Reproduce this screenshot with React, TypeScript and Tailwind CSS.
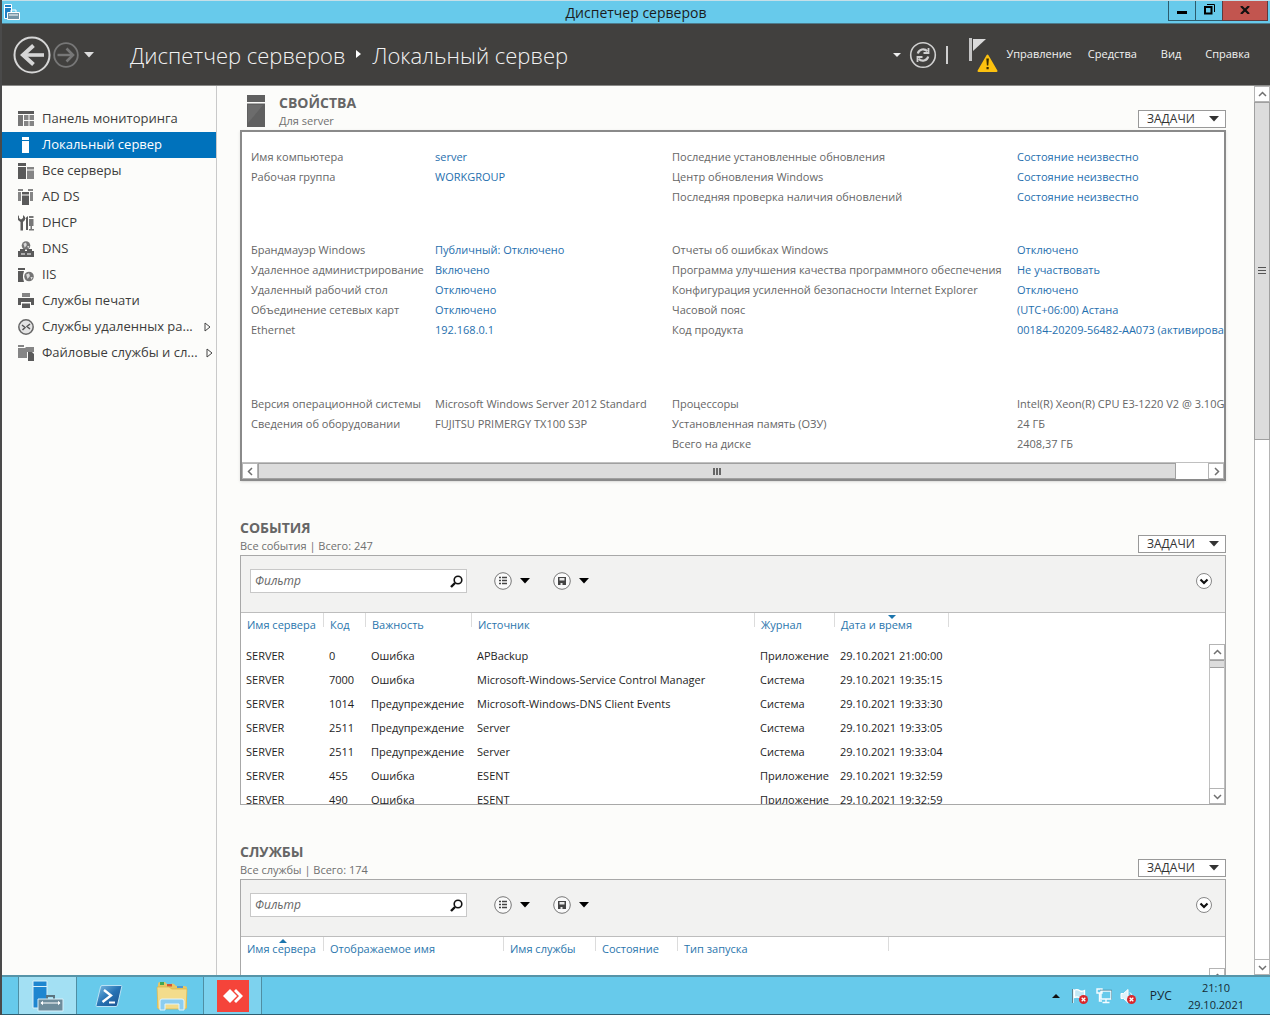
import { ReactNode, useState } from "react";

const properties = [
    {
        left: [
            ['Имя компьютера', 'server'],
            ['Рабочая группа', 'WORKGROUP'],
        ],
        right: [
            ['Последние установленные обновления', 'Состояние неизвестно'],
            ['Центр обновления Windows', 'Состояние неизвестно'],
            ['Последняя проверка наличия обновлений', 'Состояние неизвестно'],
        ],
        isLink: true,
    },
    {
        left: [
            ['Брандмауэр Windows', 'Публичный: Отключено'],
            ['Удаленное администрирование', 'Включено'],
            ['Удаленный рабочий стол', 'Отключено'],
            ['Объединение сетевых карт', 'Отключено'],
            ['Ethernet', '192.168.0.1'],
        ],
        right: [
            ['Отчеты об ошибках Windows', 'Отключено'],
            ['Программа улучшения качества программного обеспечения', 'Не участвовать'],
            ['Конфигурация усиленной безопасности Internet Explorer', 'Отключено'],
            ['Часовой пояс', '(UTC+06:00) Астана'],
            ['Код продукта', '00184-20209-56482-AA073 (активировано)'],
        ],
        isLink: true,
    },
    {
        left: [
            ['Версия операционной системы', 'Microsoft Windows Server 2012 Standard'],
            ['Сведения об оборудовании', 'FUJITSU PRIMERGY TX100 S3P'],
        ],
        right: [
            ['Процессоры', 'Intel(R) Xeon(R) CPU E3-1220 V2 @ 3.10GHz'],
            ['Установленная память (ОЗУ)', '24 ГБ'],
            ['Всего на диске', '2408,37 ГБ'],
        ],
        isLink: false,
    },
]

type Column = { name: string; width: string; sort?: 'up' | 'down' }

const eventColumns: Column[] = [
    { name: 'Имя сервера', width: 'w-[83px]' },
    { name: 'Код', width: 'w-[42px]' },
    { name: 'Важность', width: 'w-[106px]' },
    { name: 'Источник', width: 'w-[283px]' },
    { name: 'Журнал', width: 'w-[80px]' },
    { name: 'Дата и время', width: 'w-[114px]', sort: 'down' },
]

const events = [
    ['SERVER', '0', 'Ошибка', 'APBackup', 'Приложение', '29.10.2021 21:00:00'],
    ['SERVER', '7000', 'Ошибка', 'Microsoft-Windows-Service Control Manager', 'Система', '29.10.2021 19:35:15'],
    ['SERVER', '1014', 'Предупреждение', 'Microsoft-Windows-DNS Client Events', 'Система', '29.10.2021 19:33:30'],
    ['SERVER', '2511', 'Предупреждение', 'Server', 'Система', '29.10.2021 19:33:05'],
    ['SERVER', '2511', 'Предупреждение', 'Server', 'Система', '29.10.2021 19:33:04'],
    ['SERVER', '455', 'Ошибка', 'ESENT', 'Приложение', '29.10.2021 19:32:59'],
    ['SERVER', '490', 'Ошибка', 'ESENT', 'Приложение', '29.10.2021 19:32:59'],
]

const serviceColumns: Column[] = [
    { name: 'Имя сервера', width: 'w-[83px]', sort: 'up' },
    { name: 'Отображаемое имя', width: 'w-[180px]' },
    { name: 'Имя службы', width: 'w-[92px]' },
    { name: 'Состояние', width: 'w-[82px]' },
    { name: 'Тип запуска', width: 'w-[211px]' },
]

function NavIcon({ children }: { children: ReactNode }) {
    return <svg viewBox="0 0 16 16" className="w-4 h-4 shrink-0" fill="#5a5a5a" aria-hidden="true">{children}</svg>
}

const globe = (cx: number, cy: number, r: number) => (
    <g>
        <circle cx={cx} cy={cy} r={r} fill="#747474" />
        <path d={`M${cx - r * 0.6} ${cy - r * 0.4} l${r * 0.6} ${-r * 0.3} l${r * 0.2} ${r * 0.6} l${-r * 0.5} ${r * 0.6}z M${cx + r * 0.3} ${cy + r * 0.1} l${r * 0.5} 0 l${-r * 0.3} ${r * 0.6}z`} fill="#d8d8d8" />
    </g>
)

const navItems = [
    {
        text: 'Панель мониторинга',
        icon: <NavIcon><path d="M0 0h16v3H0z" /><path d="M0 4h5v11H0z" fill="#777" /><path d="M6 4h4.500v5H6zM11.500 4H16v5h-4.500zM6 10h4.500v5H6zM11.500 10H16v5h-4.500z" fill="#858585" /></NavIcon>,
    },
    {
        text: 'Локальный сервер',
        icon: <NavIcon><path d="M4 0h7v3H4zM4 4h7v12H4z" fill="#fff" /></NavIcon>,
    },
    {
        text: 'Все серверы',
        icon: <NavIcon><path d="M0 0h8v3H0zM0 4h8v12H0z" /><path d="M9 4h7v2.500H9zM9 7.500h7V16H9z" fill="#858585" /></NavIcon>,
    },
    {
        text: 'AD DS',
        icon: <NavIcon><path d="M0 0h5v2H0zM10 0h5v2h-5zM0 3h3v9H0zM12 3h3v9h-3z" fill="#858585" /><path d="M4 3h7v2.500H4zM4 6.500h7V16H4z" /></NavIcon>,
    },
    {
        text: 'DHCP',
        icon: <NavIcon><path d="M1 0v3l2 1.500L5 3V0l2 2v3L5 7v8.500H2.500V7L0 5V1.500z" /><path d="M7.500 3L10 1v14H8V4h-.5z" /><path d="M11 1h4.500v2H11zM11 4h4.500v7H11zM12.500 11h1.500v3h2v1.500h-5V14h1.500z" fill="#777" /></NavIcon>,
    },
    {
        text: 'DNS',
        icon: <NavIcon>{globe(8, 4.5, 4.3)}<path d="M2 8h5v2h2V8h5v2h2v6H0v-6h2z" /><path d="M3 12.500h4v1H3zM9 12.500h4v1H9z" fill="#fff" /></NavIcon>,
    },
    {
        text: 'IIS',
        icon: <NavIcon><path d="M0 1h7v2H0zM0 4h6l-1 4v3l1 4H0z" />{globe(11, 9.5, 4.8)}</NavIcon>,
    },
    {
        text: 'Службы печати',
        icon: <NavIcon><path d="M4 0h8v4H4z" fill="#858585" /><path d="M0 5h16v7h-3V9H3v3H0zM4 10.500h8V15H4z" /></NavIcon>,
    },
    {
        text: 'Службы удаленных ра...',
        icon: <NavIcon><circle cx="8" cy="8" r="7.200" fill="#e4e4e4" stroke="#666" strokeWidth="1.500" /><path d="M4 6l3 2.500L4.500 11M12 5L9 7.500l3 2.500" fill="none" stroke="#555" strokeWidth="1.500" /></NavIcon>,
        nested: true,
    },
    {
        text: 'Файловые службы и сл...',
        icon: <NavIcon><path d="M0 0h6v2H0zM0 3h7l1-1h8v5H9v6H0z" fill="#858585" /><path d="M10 7h4l2 2v7h-6z" /></NavIcon>,
        nested: true,
    },
]

function Chevron({ dir }: { dir: 'up' | 'down' | 'left' | 'right' }) {
    const paths = { up: 'M1 6l3.500-3.500L8 6', down: 'M1 3l3.500 3.500L8 3', left: 'M6 1L2.500 4.500L6 8', right: 'M3 1l3.500 3.500L3 8' }
    return <svg viewBox="0 0 9 9" className="w-[9px] h-[9px]" fill="none" stroke="#707070" strokeWidth="1.500" aria-hidden="true"><path d={paths[dir]} /></svg>
}

function ScrollButton({ dir }: { dir: 'up' | 'down' | 'left' | 'right' }) {
    return (
        <button type="button" aria-label={dir} className="w-4 h-4 shrink-0 flex items-center justify-center bg-white border border-[#b4b4b4]">
            <Chevron dir={dir} />
        </button>
    )
}

function Caret({ className }: { className?: string }) {
    return <svg viewBox="0 0 10 6" className={`w-[10px] h-[6px] ${className ?? ''}`} fill="currentColor" aria-hidden="true"><path d="M0 0h10L5 5.500z" /></svg>
}

function SectionHeader({ title, subtitle, icon }: { title: string; subtitle: string; icon?: ReactNode }) {
    return (
        <div className="flex items-end">
            {icon}
            <div className="mr-auto">
                <h2 className="text-[14px] leading-[18px] font-bold text-[#666]">{title}</h2>
                <p className="text-[11px] leading-[18px] text-[#707070]">{subtitle}</p>
            </div>
            <button type="button" className="flex items-center justify-between w-[88px] h-[18px] mb-0.5 pl-2 pr-1.5 border border-[#999] bg-white text-[12px] text-[#333]">
                ЗАДАЧИ
                <Caret />
            </button>
        </div>
    )
}

function Toolbar({ id }: { id: string }) {
    const [filter, setFilter] = useState('')
    return (
        <div className="flex items-center h-[57px] pl-[9px] pr-3 pb-1.5 bg-[#f2f2f1] border-b border-[#bdbdbd]">
            <div className="flex items-center w-[217px] h-6 border border-[#c8c8c8] bg-white">
                <label htmlFor={id} className="sr-only">Фильтр</label>
                <input id={id} value={filter} onChange={e => setFilter(e.target.value)} placeholder="Фильтр" className="flex-1 min-w-0 px-1 text-[12px] italic outline-none placeholder:text-[#666]" />
                <svg viewBox="0 0 13 13" className="w-[13px] h-[13px] mr-[3px]" fill="none" stroke="#111" aria-hidden="true"><circle cx="8" cy="5" r="3.800" strokeWidth="1.600" /><path d="M5 8L1 12" strokeWidth="2.400" /></svg>
            </div>
            <button type="button" aria-label="Группировка" className="ml-[27px] flex items-center gap-2">
                <svg viewBox="0 0 18 18" className="w-[18px] h-[18px]" aria-hidden="true"><circle cx="9" cy="9" r="8.300" fill="#fafafa" stroke="#777" /><path d="M5 5.500h2M5 8.500h2M5 11.500h2M8 5.500h5M8 8.500h5M8 11.500h5" stroke="#444" strokeWidth="1.700" /></svg>
                <Caret className="text-black" />
            </button>
            <button type="button" aria-label="Сохранить" className="ml-[23px] flex items-center gap-2">
                <svg viewBox="0 0 18 18" className="w-[18px] h-[18px]" aria-hidden="true"><circle cx="9" cy="9" r="8.300" fill="#fafafa" stroke="#777" /><path d="M5 5h8v8H5z" fill="#444" /><path d="M6.500 6h5v2.500h-5zM7.500 11h2v2h-2z" fill="#e8e8e8" /></svg>
                <Caret className="text-black" />
            </button>
            <button type="button" aria-label="Развернуть" className="ml-auto">
                <svg viewBox="0 0 18 18" className="w-[18px] h-[18px]" aria-hidden="true"><circle cx="9" cy="9" r="7.500" fill="#fff" stroke="#888" /><path d="M5.500 7.500L9 11l3.500-3.500" fill="none" stroke="#111" strokeWidth="2.200" /></svg>
            </button>
        </div>
    )
}

function DataTable({ columns, rows }: { columns: Column[]; rows: string[][] }) {
    return (
        <table className="w-min table-fixed text-left text-[11px]">
            <thead>
                <tr>
                    {columns.map(col => (
                        <th key={col.name} className={`${col.width} relative h-[31px] p-0 pl-1.5 pb-1.5 font-normal whitespace-nowrap text-[#2a76ad]`}>
                            {col.sort && (
                                <svg viewBox="0 0 8 4" className="absolute top-0.5 left-1/2 -translate-x-1/2 w-2 h-1" fill="#1b75ad" aria-hidden="true">
                                    <path d={col.sort === 'up' ? 'M0 4h8L4 0z' : 'M0 0h8L4 4z'} />
                                </svg>
                            )}
                            {col.name}
                            <span className="absolute right-0 top-0 h-3.5 border-r border-[#dcdcdc]" />
                        </th>
                    ))}
                </tr>
            </thead>
            <tbody>
                {rows.map((row, index) => (
                    <tr key={index}>
                        {row.map((cell, i) => <td key={i} className="h-6 p-0 pl-[5px] whitespace-nowrap text-[#1e1e1e]">{cell}</td>)}
                    </tr>
                ))}
            </tbody>
        </table>
    )
}

function PropertyCell({ data, isLink }: { data?: string[]; isLink: boolean }) {
    if (!data) return <div className="col-span-2" />
    return (
        <div className="col-span-2 grid grid-cols-subgrid">
            <dt className="text-[#666]">{data[0]}</dt>
            <dd className="text-[#666]">{isLink ? <a href="#" className="text-[#1f6fae]">{data[1]}</a> : data[1]}</dd>
        </div>
    )
}

function TitleBar() {
    return (
        <div className="flex h-6 shrink-0 bg-[#67caeb] border-t border-t-[#c5dfe8] border-b border-b-[#4d7b8c]">
            <div className="flex-1 pl-0.5 pt-[3px]">
                <svg viewBox="0 0 16 16" className="w-4 h-4" aria-hidden="true">
                    <path d="M.5.500h7v14h-7z" fill="#1e7fc4" stroke="#fff" /><path d="M1 3.500h6" stroke="#fff" />
                    <path d="M3.500 8.500h12v7h-12z" fill="#7494a5" stroke="#fff" /><path d="M7 8V6h5v2M5 11h9" fill="none" stroke="#fff" />
                </svg>
            </div>
            <h1 className="text-[14px] leading-[23px] text-[#1c1c1c]">Диспетчер серверов</h1>
            <div className="flex-1 flex justify-end items-start pr-0.5">
                <button type="button" aria-label="Свернуть" className="w-7 h-5 flex items-center justify-center border border-t-0 border-[#2c5c6d]"><span className="w-[10px] h-[3px] mt-1 bg-black" /></button>
                <button type="button" aria-label="Восстановить" className="w-[26px] h-5 flex items-center justify-center border-b border-[#2c5c6d]">
                    <svg viewBox="0 0 11 11" className="w-[11px] h-[11px] mb-0.5" fill="none" stroke="#000" aria-hidden="true"><path d="M3 .5h7.500V8" /><path d="M1 3h6.500v6.500H1z" strokeWidth="2" /></svg>
                </button>
                <button type="button" aria-label="Закрыть" className="w-[46px] h-5 flex items-center justify-center bg-[#c2554f] border border-t-0 border-[#5f3a3c]">
                    <svg viewBox="0 0 10 8" className="w-[10px] h-2 mb-0.5" stroke="#111" strokeWidth="2.200" aria-hidden="true"><path d="M1 0l8 8M9 0L1 8" /></svg>
                </button>
            </div>
        </div>
    )
}

function Header() {
    return (
        <header className="flex items-center h-[62px] shrink-0 pl-[11px] pr-5 bg-[#41403e] border-b border-[#8a8a88] text-[#f2f2f2]">
            <button type="button" aria-label="Назад">
                <svg viewBox="0 0 38 38" className="w-[38px] h-[38px]" fill="none" stroke="#d6d6d6" aria-hidden="true"><circle cx="19" cy="19" r="17.500" strokeWidth="2" /><path d="M31 19H10" strokeWidth="3.600" /><path d="M20.500 9.500L10 19l10.500 9.500" strokeWidth="4" /></svg>
            </button>
            <button type="button" aria-label="Вперед" className="ml-0.5">
                <svg viewBox="0 0 26 26" className="w-[26px] h-[26px]" fill="none" stroke="#777" aria-hidden="true"><circle cx="13" cy="13" r="11.800" strokeWidth="1.800" /><path d="M4.500 13H20" strokeWidth="2.400" /><path d="M13.500 6.500L20 13l-6.500 6.500" strokeWidth="2.600" /></svg>
            </button>
            <button type="button" aria-label="Журнал переходов" className="ml-[5px]"><Caret className="text-[#ddd]" /></button>
            <nav className="flex items-center ml-9 pt-0.5 text-[22px] font-light whitespace-nowrap">
                <a href="#">Диспетчер серверов</a>
                <svg viewBox="0 0 5 8" className="w-[5px] h-2 mx-[11px] mb-1" fill="#fff" aria-hidden="true"><path d="M0 0l5 4-5 4z" /></svg>
                <a href="#">Локальный сервер</a>
            </nav>
            <div className="flex items-center ml-auto text-[11px] font-medium">
                <button type="button" aria-label="Параметры обновления"><svg viewBox="0 0 8 4" className="w-2 h-1" fill="#eee" aria-hidden="true"><path d="M0 0h8L4 4z" /></svg></button>
                <button type="button" aria-label="Обновить" className="ml-2">
                    <svg viewBox="0 0 28 28" className="w-7 h-7" fill="none" stroke="#d0d0d0" aria-hidden="true">
                        <circle cx="14" cy="14" r="12.300" strokeWidth="1.600" />
                        <path d="M8.800 12.500a5.500 5.500 0 0 1 9.500-2.300M19.200 15.500a5.500 5.500 0 0 1-9.500 2.300" strokeWidth="2.200" />
                        <path d="M19.500 7v5H14.500M8.500 21v-5H13.500" strokeWidth="1.800" />
                    </svg>
                </button>
                <span className="ml-[9px] w-0.5 h-[18px] bg-[#d0d0d0]" />
                <button type="button" aria-label="Уведомления" className="ml-5">
                    <svg viewBox="0 0 30 36" className="w-[30px] h-9" aria-hidden="true">
                        <path d="M1 1h3v23H1z" fill="#c4c4c4" /><path d="M5 2h13L5 14z" fill="#dadada" />
                        <path d="M19.500 18.500L10.500 34h18z" fill="#fcc10f" stroke="#fcc10f" strokeWidth="2" strokeLinejoin="round" /><path d="M18.300 21.500h2.600l-.6 7h-1.400zM18.500 30h2.200v2.200h-2.200z" fill="#3a2d00" />
                    </svg>
                </button>
                <button type="button" className="ml-2">Управление</button>
                <button type="button" className="ml-4">Средства</button>
                <button type="button" className="ml-6">Вид</button>
                <button type="button" className="ml-6">Справка</button>
            </div>
        </header>
    )
}

function TrayError() {
    return <g><circle cx="11.500" cy="11.500" r="4.500" fill="#d9262b" /><path d="M9.700 9.700l3.600 3.600M13.300 9.700l-3.600 3.600" stroke="#fff" strokeWidth="1.300" /></g>
}

function Taskbar() {
    return (
        <footer className="flex h-10 shrink-0 pl-4 pr-[26px] bg-[#67caeb] border-t-2 border-t-[#5694a8] border-b border-b-[#2f5e70] text-[12px] text-[#162a33]">
            <button type="button" aria-label="Диспетчер серверов" className="w-[59px] flex items-center justify-center bg-[#a3e0f3] border-x border-[#4f8ea3]">
                <svg viewBox="0 0 32 32" className="w-8 h-8" aria-hidden="true">
                    <path d="M1 1h14v27H1z" fill="#1e86d0" stroke="#d8f0fa" /><path d="M1 6.500h14" stroke="#d8f0fa" />
                    <path d="M15 19v-3h7v3" fill="none" stroke="#5c7480" strokeWidth="2" /><path d="M6 19h25v12H6z" fill="#6e8c9b" stroke="#d8f0fa" /><path d="M9 23h19" stroke="#fff" /><path d="M11 20.800v4.400l-2.500-2.200zM26 20.800v4.400l2.500-2.200z" fill="#fff" />
                </svg>
            </button>
            <button type="button" aria-label="PowerShell" className="w-16 flex items-center justify-center">
                <svg viewBox="0 0 28 24" className="w-7 h-6" aria-hidden="true">
                    <defs><linearGradient id="ps" x1="0" y1="0" x2="1" y2="1"><stop offset="0" stopColor="#7fc0e6" /><stop offset=".5" stopColor="#2672b4" /><stop offset="1" stopColor="#1b4f8c" /></linearGradient></defs>
                    <path d="M7 1.500h19q1 0 .8 1L22.500 21q-.3 1.500-1.500 1.500H2q-1.200 0-.9-1.200L5.500 3q.3-1.500 1.500-1.500z" fill="url(#ps)" stroke="#b9e2f5" />
                    <path d="M9 6l7 5.500L7.500 18" fill="none" stroke="#fff" strokeWidth="2.400" /><path d="M14 18.500h6" stroke="#fff" strokeWidth="2" />
                </svg>
            </button>
            <button type="button" aria-label="Проводник" className="w-[62px] flex items-center justify-center">
                <svg viewBox="0 0 34 30" className="w-[34px] h-[30px]" aria-hidden="true">
                    <path d="M3 3q0-2 2-2h5l2 2h4q1-1 3 0l2 2h8q3 0 3 2v20H2z" fill="#e7c765" />
                    <path d="M5 1h4v3H5z" fill="#42a650" /><path d="M12 3h5v2.500h-5z" fill="#d2553a" /><path d="M22 5h6v2h-6z" fill="#4c9bd8" />
                    <path d="M2 6h12l3 2h15l-1 20H3z" fill="#f3dc8c" stroke="#d8b54c" strokeWidth=".7" />
                    <path d="M5 29V20q0-2 2-2h20q2 0 2 2v9h-5v-6H10v6z" fill="#8ccdf0" stroke="#e2f5fd" />
                </svg>
            </button>
            <button type="button" aria-label="AnyDesk" className="w-[59px] flex items-center justify-center bg-[#7dd2ee] border-x border-[#4f8ea3]">
                <svg viewBox="0 0 32 32" className="w-8 h-8" aria-hidden="true"><path d="M0 0h32v32H0z" fill="#f5443a" /><path d="M13 9l7 7-7 7-7-7z" fill="#fff" /><path d="M17 11l2-2 7 7-7 7-2-2 5-5z" fill="#fff" /></svg>
            </button>
            <div className="flex items-center ml-auto">
                <button type="button" aria-label="Скрытые значки"><svg viewBox="0 0 8 4" className="w-2 h-1" fill="#111" aria-hidden="true"><path d="M0 4h8L4 0z" /></svg></button>
                <div className="flex items-center gap-2 ml-3 mr-[14px]">
                    <svg viewBox="0 0 16 16" className="w-4 h-4" aria-hidden="true"><path d="M1 1v14M2.500 2q3-1 5 .5t5 0v7q-2.500 1-5 0t-5 0z" fill="#c5e8f5" stroke="#fff" strokeWidth="1.300" /><path d="M.5 1v14" stroke="#35535f" strokeWidth=".7" /><TrayError /></svg>
                    <svg viewBox="0 0 16 16" className="w-4 h-4" fill="#67caeb" stroke="#f6fcff" strokeWidth="1.400" aria-hidden="true"><path d="M5 3h10v8H5zM10 11v3M6.500 14.500h7M1 1h5v4H1zM3.500 5v8H6" /><path d="M4 2.200h11.800v9.500" fill="none" stroke="#3c6777" strokeWidth=".6" /></svg>
                    <svg viewBox="0 0 16 16" className="w-4 h-4" aria-hidden="true"><path d="M1 5.500h2.500L8 1.500v13l-4.500-4H1z" fill="#dff2fa" stroke="#fff" /><path d="M10 4.500q2 1.500 2 4" fill="none" stroke="#fff" /><TrayError /></svg>
                </div>
                <button type="button">РУС</button>
                <time className="ml-4 text-center text-[11px] leading-[17px]">21:10<br />29.10.2021</time>
            </div>
        </footer>
    )
}

export default function App() {
    const [selected, setSelected] = useState(1)

    return (
        <div className="flex flex-col h-screen overflow-hidden border-l-2 border-[#4a4a4a] bg-[#fcfcfa] font-['Open_Sans','Noto_Sans',sans-serif]">
            <TitleBar />
            <Header />
            <div className="flex flex-1 min-h-0">
                <nav className="w-[215px] shrink-0 pt-5 border-r border-[#c9c9c9]">
                    {navItems.map((item, index) => (
                        <button
                            key={item.text}
                            type="button"
                            onClick={() => setSelected(index)}
                            className={`flex items-center w-full h-[26px] pl-4 pr-[5px] gap-2 text-[13px] whitespace-nowrap ${index === selected ? 'bg-[#0072bc] text-white' : 'text-[#3c3c3c]'}`}
                        >
                            {item.icon}
                            {item.text}
                            {item.nested && <svg viewBox="0 0 7 10" className="w-[7px] h-[10px] ml-auto shrink-0" fill="none" stroke="#444" aria-hidden="true"><path d="M1 1l5 4-5 4z" /></svg>}
                        </button>
                    ))}
                </nav>
                <main className="flex-1 min-w-0 overflow-hidden pl-[23px] pr-7 pt-2">
                    <section>
                        <SectionHeader
                            title="СВОЙСТВА"
                            subtitle="Для server"
                            icon={<svg viewBox="0 0 18 32" className="w-[18px] h-8 ml-[7px] mr-[14px] mb-[3px]" aria-hidden="true"><path d="M0 0h18v7H0zM0 8.500h18V32H0z" fill="#606060" /><path d="M1 10h15L1 28z" fill="#6c6c6c" /></svg>}
                        />
                        <div className="border-2 border-[#8a8a8a] bg-white shadow-sm">
                            <div className="flex flex-col pl-[9px] pt-[15px] pb-2 overflow-hidden text-[11px] leading-5 whitespace-nowrap">
                                {properties.map((group, g) => (
                                    <dl key={g} className={`grid grid-cols-[184px_237px_345px_max-content] ${g === 1 ? 'mt-[33px]' : ''} ${g === 2 ? 'mt-[54px]' : ''}`}>
                                        {group.right.map((right, i) => [
                                            <PropertyCell key={`l${i}`} data={group.left[i]} isLink={group.isLink} />,
                                            <PropertyCell key={`r${i}`} data={right} isLink={group.isLink} />,
                                        ])}
                                    </dl>
                                ))}
                            </div>
                            <div className="flex border-t border-[#c0c0c0]">
                                <ScrollButton dir="left" />
                                <div className="flex flex-1 items-center justify-center gap-px bg-[#dcdcdc] border border-[#a0a0a0]">
                                    <span className="w-0.5 h-[7px] bg-[#666]" /><span className="w-0.5 h-[7px] bg-[#666]" /><span className="w-0.5 h-[7px] bg-[#666]" />
                                </div>
                                <div className="w-8" />
                                <ScrollButton dir="right" />
                            </div>
                        </div>
                    </section>

                    <section className="mt-[38px]">
                        <SectionHeader title="СОБЫТИЯ" subtitle="Все события | Всего: 247" />
                        <div className="h-[250px] flex flex-col border border-[#a8a8a8] bg-white overflow-hidden">
                            <Toolbar id="events-filter" />
                            <div className="flex flex-1 min-h-0">
                                <div className="flex-1 overflow-hidden"><DataTable columns={eventColumns} rows={events} /></div>
                                <div className="flex flex-col w-4 mt-[31px] border-x border-[#c0c0c0]">
                                    <div className="flex justify-center"><ScrollButton dir="up" /></div>
                                    <div className="h-2 bg-[#dcdcdc] border-y border-[#a0a0a0]" />
                                    <div className="flex justify-center mt-auto"><ScrollButton dir="down" /></div>
                                </div>
                            </div>
                        </div>
                    </section>

                    <section className="mt-[38px]">
                        <SectionHeader title="СЛУЖБЫ" subtitle="Все службы | Всего: 174" />
                        <div className="h-[250px] flex flex-col border border-[#a8a8a8] bg-white overflow-hidden">
                            <Toolbar id="services-filter" />
                            <div className="flex flex-1 min-h-0">
                                <div className="flex-1 overflow-hidden"><DataTable columns={serviceColumns} rows={[]} /></div>
                                <div className="flex flex-col w-4 mt-[31px] border-x border-[#c0c0c0]">
                                    <div className="flex justify-center"><ScrollButton dir="up" /></div>
                                </div>
                            </div>
                        </div>
                    </section>
                </main>
                <div className="flex flex-col w-4 shrink-0 bg-white">
                    <ScrollButton dir="up" />
                    <div className="flex flex-col items-center justify-center gap-0.5 h-[38%] bg-[#dcdcdc] border border-[#a0a0a0]">
                        <span className="w-2 h-px bg-[#555]" /><span className="w-2 h-px bg-[#555]" /><span className="w-2 h-px bg-[#555]" />
                    </div>
                    <div className="flex-1 border-x border-[#b4b4b4]" />
                    <ScrollButton dir="down" />
                </div>
            </div>
            <Taskbar />
        </div>
    )
}
